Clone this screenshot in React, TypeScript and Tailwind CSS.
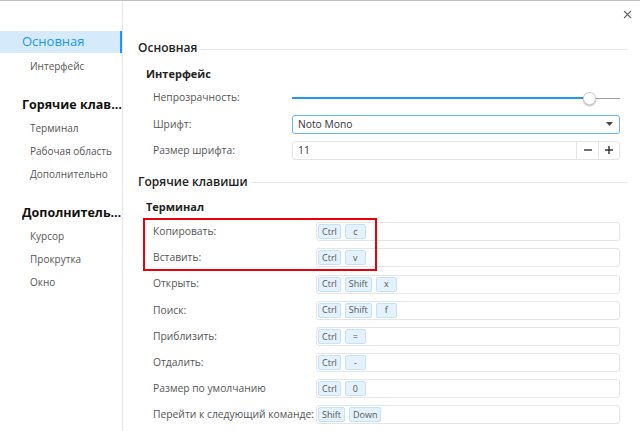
import React from 'react'

const font = { fontFamily: '"Open Sans", "Noto Sans", sans-serif' }

function SideItem({ label, className = '' }: { label: string; className?: string }) {
  return (
    <div className={`h-[23px] flex items-center pl-[30px] text-[10px] text-[#555] ${className}`}>{label}</div>
  )
}

function SideHeading({ label }: { label: string }) {
  return (
    <div className="mt-[16px] h-[23px] flex items-center pl-[22px] text-[12.5px] font-bold text-[#111]">
      <span className="truncate">{label}</span>
    </div>
  )
}

function SectionHeading({ label, className = '' }: { label: string; className?: string }) {
  return (
    <div className={`h-[22px] flex items-center gap-[3px] ${className}`}>
      <span className="text-[12px] font-semibold text-[#222] whitespace-nowrap">{label}</span>
      <div className="flex-1 h-px bg-[#e6e6e6] mt-[2px]" />
    </div>
  )
}

function SubHeading({ label, className = '' }: { label: string; className?: string }) {
  return (
    <div className={`h-[22px] flex items-center pl-[8px] text-[11px] font-bold text-[#222] ${className}`}>
      {label}
    </div>
  )
}

function Row({ label, labelWidth, children }: { label: string; labelWidth: string; children: React.ReactNode }) {
  return (
    <div className="h-[26.2px] flex items-center pl-[15px]">
      <div className={`${labelWidth} text-[10.3px] text-[#555] whitespace-nowrap`}>{label}</div>
      <div className="flex-1">{children}</div>
    </div>
  )
}

function Keys({ keys }: { keys: string[] }) {
  return (
    <div className="h-[19px] border border-[#e4e4e4] rounded-[3px] flex items-center gap-[4px] pl-[1px]">
      {keys.map((k) => (
        <span
          key={k}
          className="h-[15px] min-w-[21px] px-[3px] flex items-center justify-center bg-[#e3f2fd] border border-[#c5e1f9] rounded-[2px] text-[9px] text-[#555]"
        >
          {k}
        </span>
      ))}
    </div>
  )
}

const hotkeys: { label: string; keys: string[] }[] = [
  { label: 'Открыть:', keys: ['Ctrl', 'Shift', 'x'] },
  { label: 'Поиск:', keys: ['Ctrl', 'Shift', 'f'] },
  { label: 'Приблизить:', keys: ['Ctrl', '='] },
  { label: 'Отдалить:', keys: ['Ctrl', '-'] },
  { label: 'Размер по умолчанию', keys: ['Ctrl', '0'] },
  { label: 'Перейти к следующий команде:', keys: ['Shift', 'Down'] },
]

export default function App() {
  return (
    <div className="w-[640px] h-[431px] overflow-hidden bg-white border-t border-[#bdbdbd] flex" style={font}>
      {/* Sidebar */}
      <div className="w-[123px] shrink-0 border-r border-[#e6e6e6] pt-[30px]">
        <div className="h-[22px] flex items-center pl-[22px] bg-[#d5eafb] border-r-2 border-[#2196f3] text-[13px] text-[#2196f3]">
          Основная
        </div>
        <SideItem label="Интерфейс" className="mt-[2px]" />
        <SideHeading label="Горячие клавиши" />
        <SideItem label="Терминал" />
        <SideItem label="Рабочая область" />
        <SideItem label="Дополнительно" />
        <SideHeading label="Дополнительно" />
        <SideItem label="Курсор" />
        <SideItem label="Прокрутка" />
        <SideItem label="Окно" />
      </div>

      {/* Main */}
      <div className="flex-1 pl-[15px] pr-[12px]">
        <div className="h-[36px] flex items-start justify-end pt-[9px]">
          <svg width="9" height="9" viewBox="0 0 9 9" className="mr-[-4px]">
            <path d="M1 1L8 8M8 1L1 8" stroke="#666" strokeWidth="1.1" />
          </svg>
        </div>

        <SectionHeading label="Основная" />
        <SubHeading label="Интерфейс" className="mt-[4px]" />

        <div className="pr-[8px]">
          <Row label="Непрозрачность:" labelWidth="w-[139px]">
            <div className="relative h-[12px] flex items-center">
              <div className="h-[2px] bg-[#2196f3] w-[294px]" />
              <div className="h-px bg-[#9e9e9e] flex-1 ml-[10px]" />
              <div className="absolute left-[291px] top-0 w-[13px] h-[13px] rounded-full bg-white border border-[#cfcfcf] shadow-[0_1px_2px_rgba(0,0,0,0.3)]" />
            </div>
          </Row>
          <Row label="Шрифт:" labelWidth="w-[139px]">
            <div className="h-[19px] border border-[#64b5f6] rounded-[3px] flex items-center justify-between pl-[5px] pr-[6px] text-[10.3px] text-[#333]">
              <span>Noto Mono</span>
              <svg width="7" height="4" viewBox="0 0 7 4">
                <path d="M0 0H7L3.5 4Z" fill="#444" />
              </svg>
            </div>
          </Row>
          <Row label="Размер шрифта:" labelWidth="w-[139px]">
            <div className="h-[19px] border border-[#e4e4e4] rounded-[3px] flex items-center text-[10.3px] text-[#333]">
              <span className="flex-1 pl-[5px]">11</span>
              <div className="w-[22px] h-full border-l border-[#e4e4e4] flex items-center justify-center">
                <svg width="8" height="8" viewBox="0 0 8 8"><path d="M0 4H8" stroke="#333" strokeWidth="1.4" /></svg>
              </div>
              <div className="w-[21px] h-full border-l border-[#e4e4e4] flex items-center justify-center">
                <svg width="8" height="8" viewBox="0 0 8 8"><path d="M0 4H8M4 0V8" stroke="#333" strokeWidth="1.4" /></svg>
              </div>
            </div>
          </Row>
        </div>

        <SectionHeading label="Горячие клавиши" className="mt-[7px]" />
        <SubHeading label="Терминал" className="mt-[4px]" />

        <div className="pr-[8px]">
          <div className="relative">
            <Row label="Копировать:" labelWidth="w-[163px]">
              <Keys keys={['Ctrl', 'c']} />
            </Row>
            <Row label="Вставить:" labelWidth="w-[163px]">
              <Keys keys={['Ctrl', 'v']} />
            </Row>
            <div className="absolute left-[5px] top-[-1px] w-[234px] h-[53px] border-2 border-[#e8000b] pointer-events-none" />
          </div>
          {hotkeys.map((h) => (
            <Row key={h.label} label={h.label} labelWidth="w-[163px]">
              <Keys keys={h.keys} />
            </Row>
          ))}
        </div>
      </div>
    </div>
  )
}
